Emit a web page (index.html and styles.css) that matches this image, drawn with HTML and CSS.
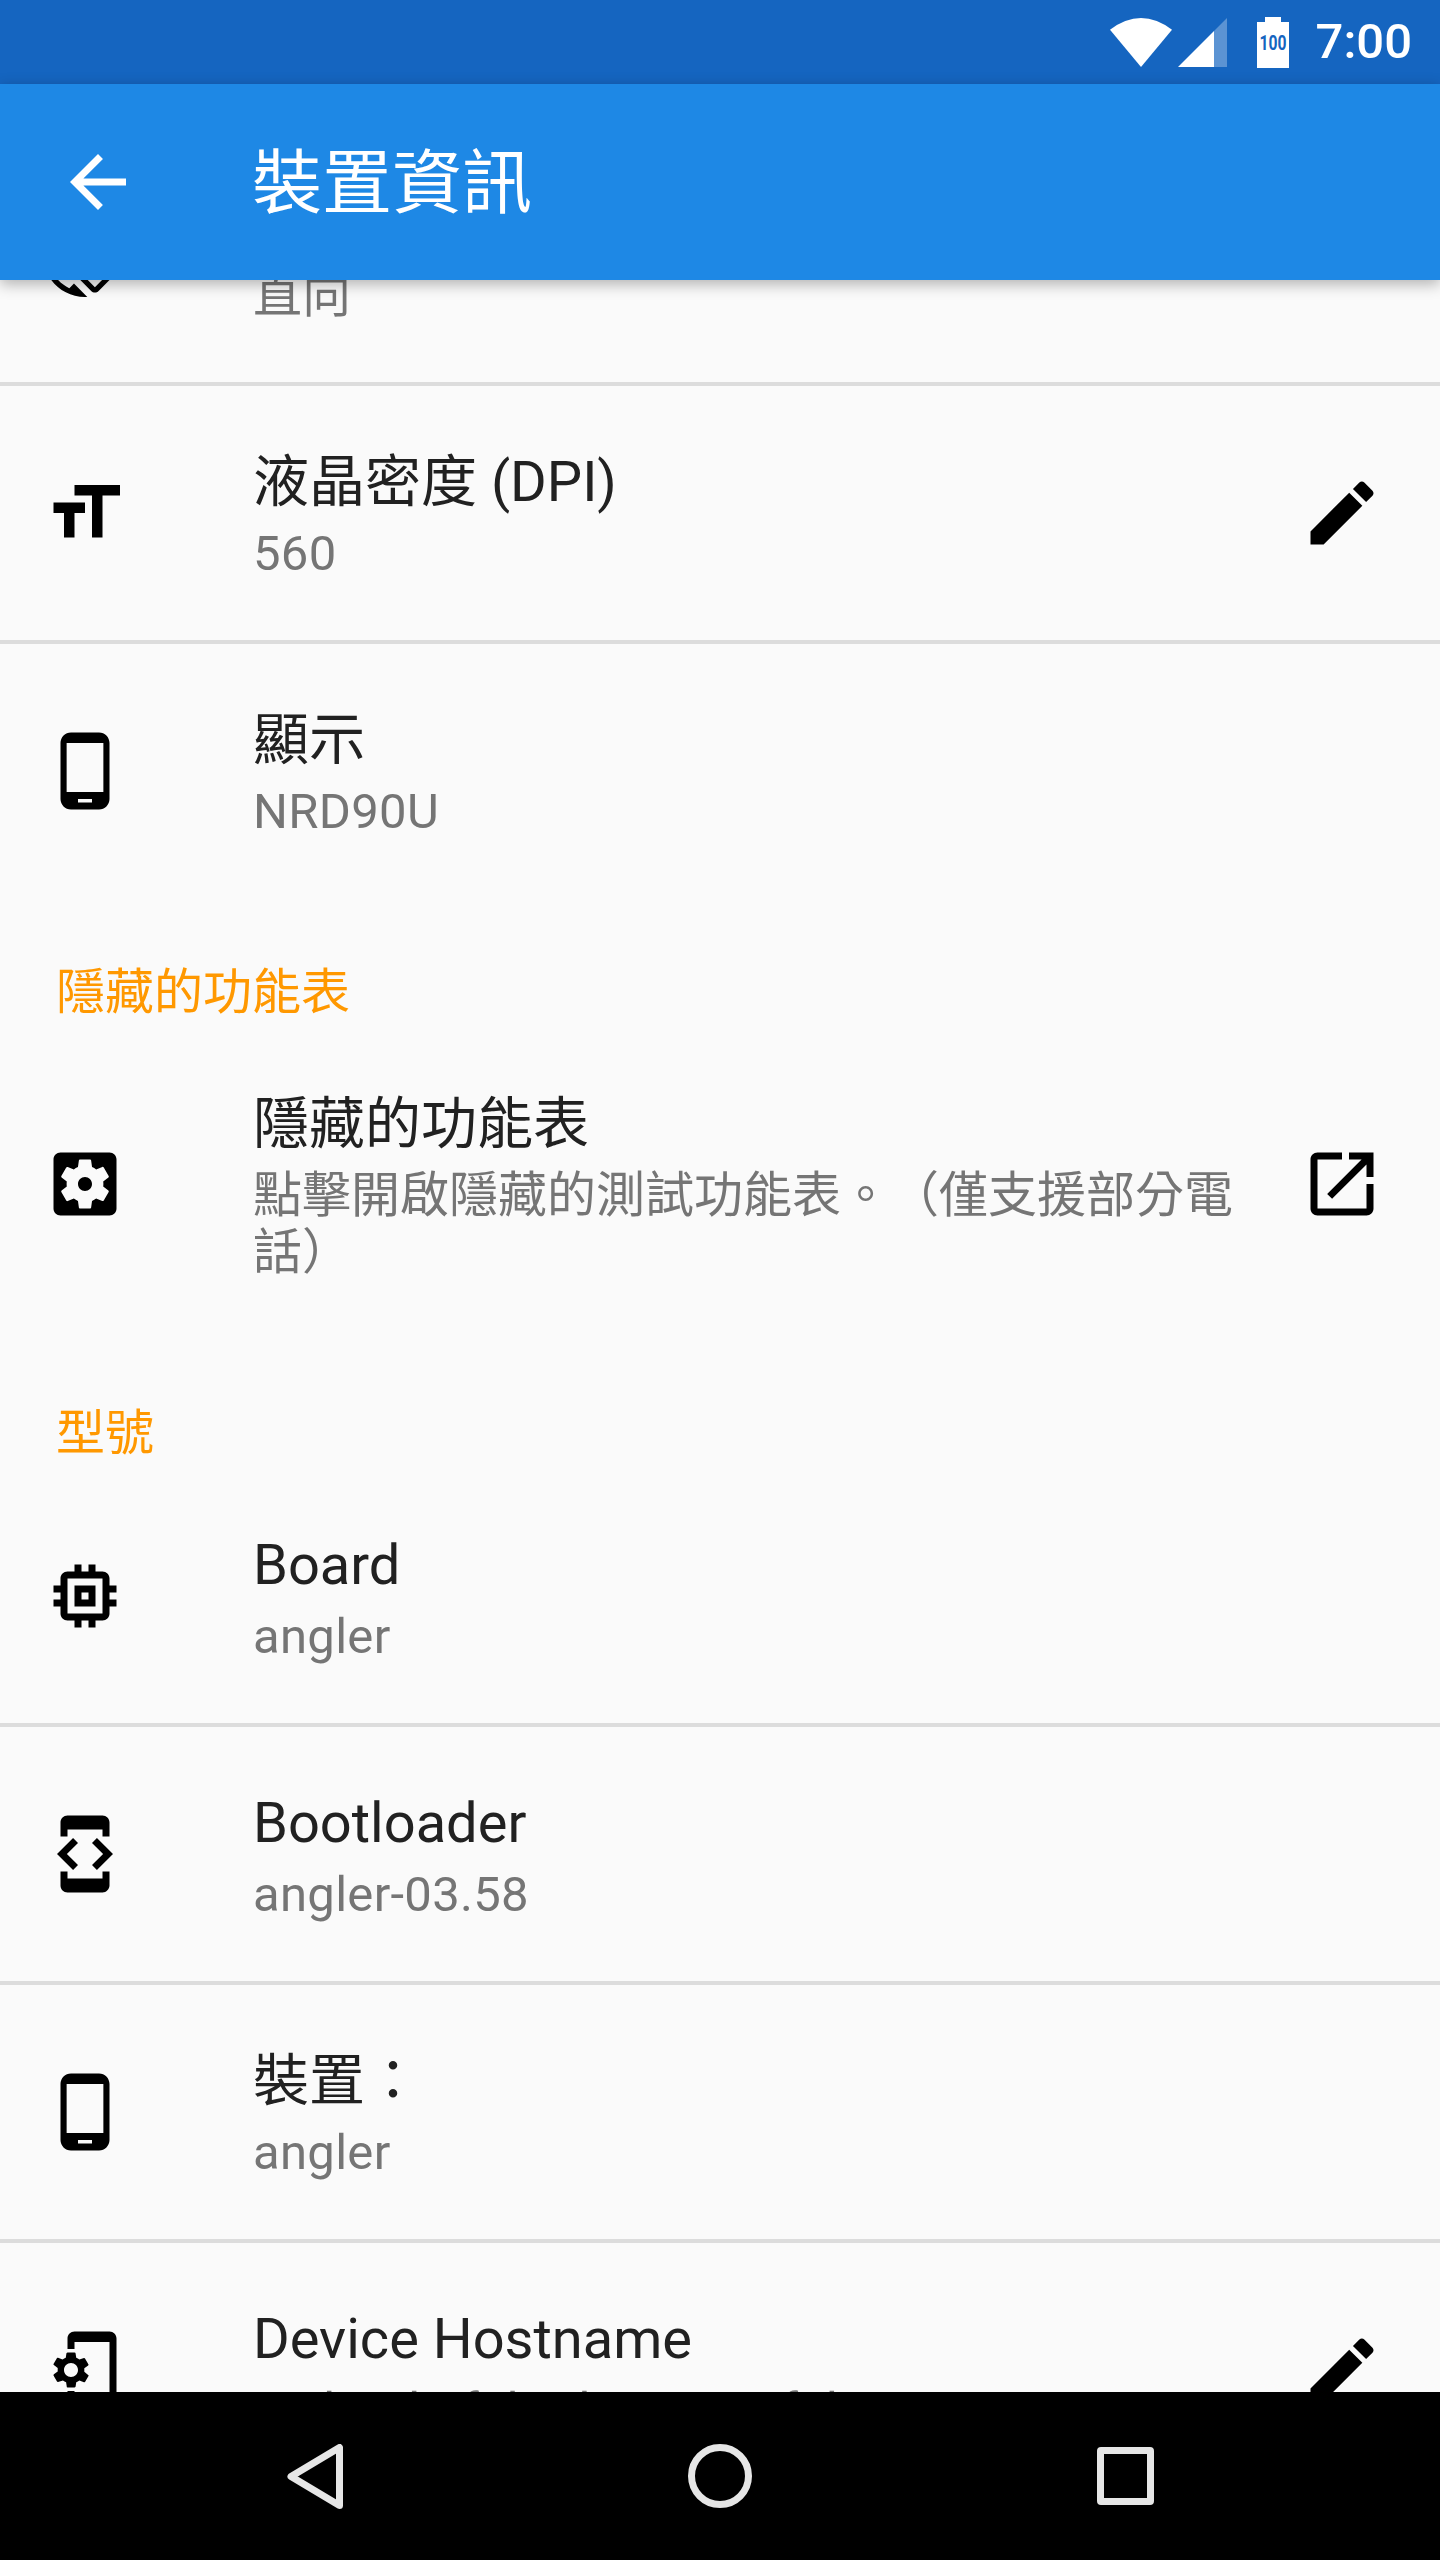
FILE: index.html
```html
<!DOCTYPE html>
<html lang="zh-TW">
<head>
    <meta charset="UTF-8">
    <meta name="viewport" content="width=device-width, initial-scale=1.0">
    <title>裝置資訊</title>
    <link rel="stylesheet" href="styles.css">
</head>
<body>
    <div class="screen">
        <div class="status-bar">
            <svg class="wifi" viewBox="0 0 62 49"><path d="M0 11.7Q31 -11.7 62 11.7L31 49Z"/></svg>
            <svg class="signal" viewBox="0 0 49 49"><path d="M36 49H0L36 13Z"/><path class="signal-empty" d="M36 49H49V0L36 13Z"/></svg>
            <svg class="battery" viewBox="0 0 32 51"><path d="M8 0H24V5H32V51H0V5H8Z"/><text class="battery-level" x="2.5" y="33" textLength="27" lengthAdjust="spacingAndGlyphs">100</text></svg>
            <span class="clock">7:00</span>
        </div>

        <div class="toolbar">
            <svg class="icon toolbar-back" viewBox="0 0 24 24"><path d="M20 11H7.83l5.59-5.59L12 4l-8 8 8 8 1.41-1.41L7.83 13H20v-2z"/></svg>
            <h1 class="toolbar-title">裝置資訊</h1>
        </div>

        <div class="list">
            <div class="list-scroll">
                <div class="row row-divided">
                    <svg class="icon" viewBox="0 0 24 24"><path d="M16.48 2.52c3.27 1.55 5.61 4.72 5.97 8.48h1.5C23.44 4.84 18.29 0 12 0l-.66.03 3.81 3.81 1.33-1.32zm-6.25-.77c-.59-.59-1.54-.59-2.12 0L1.75 8.11c-.59.59-.59 1.54 0 2.12l12.02 12.02c.59.59 1.54.59 2.12 0l6.36-6.36c.59-.59.59-1.54 0-2.12L10.23 1.75zm4.6 19.44L2.81 9.17l6.36-6.36 12.02 12.02-6.36 6.36zm-7.31.29C4.25 19.94 1.91 16.76 1.55 13H.05C.56 19.16 5.71 24 12 24l.66-.03-3.81-3.81-1.33 1.32z"/></svg>
                    <div class="row-body">
                        <div class="row-title"></div>
                        <div class="row-summary">直向</div>
                    </div>
                </div>

                <div class="row row-divided">
                    <svg class="icon" viewBox="0 0 24 24"><path d="M9 4v3h5v12h3V7h5V4H9zm-6 8h3v7h3v-7h3V9H3v3z"/></svg>
                    <div class="row-body">
                        <div class="row-title">液晶密度 (DPI)</div>
                        <div class="row-summary latin">560</div>
                    </div>
                    <svg class="icon" viewBox="0 0 24 24"><path d="M3 17.25V21h3.75L17.81 9.94l-3.75-3.75L3 17.25zM20.71 7.04c.39-.39.39-1.02 0-1.41l-2.34-2.34c-.39-.39-1.02-.39-1.41 0l-1.83 1.83 3.75 3.75 1.83-1.83z"/></svg>
                </div>

                <div class="row">
                    <svg class="icon" viewBox="0 0 24 24"><path d="M16 1H8C6.34 1 5 2.34 5 4v16c0 1.66 1.34 3 3 3h8c1.66 0 3-1.34 3-3V4c0-1.66-1.34-3-3-3zm-2 20h-4v-1h4v1zm3.25-3H6.75V4h10.5v14z"/></svg>
                    <div class="row-body">
                        <div class="row-title">顯示</div>
                        <div class="row-summary latin">NRD90U</div>
                    </div>
                </div>

                <div class="section-header">隱藏的功能表</div>

                <div class="row">
                    <svg class="icon" viewBox="0 0 24 24"><path d="M12 10c-1.1 0-2 .9-2 2s.9 2 2 2 2-.9 2-2-.9-2-2-2zm7-7H5c-1.11 0-2 .9-2 2v14c0 1.1.89 2 2 2h14c1.11 0 2-.9 2-2V5c0-1.1-.89-2-2-2zm-1.75 9c0 .23-.02.46-.05.68l1.48 1.16c.13.11.17.3.08.45l-1.4 2.42c-.09.15-.27.21-.43.15l-1.74-.7c-.36.28-.76.51-1.18.69l-.26 1.85c-.03.17-.18.3-.35.3h-2.8c-.17 0-.32-.13-.35-.29l-.26-1.85c-.43-.18-.82-.41-1.18-.69l-1.74.7c-.16.06-.34 0-.43-.15l-1.4-2.42c-.09-.15-.05-.34.08-.45l1.48-1.16c-.03-.23-.05-.46-.05-.69 0-.23.02-.46.05-.68l-1.48-1.16c-.13-.11-.17-.3-.08-.45l1.4-2.42c.09-.15.27-.21.43-.15l1.74.7c.36-.28.76-.51 1.18-.69l.26-1.85c.03-.17.18-.3.35-.3h2.8c.17 0 .32.13.35.29l.26 1.85c.43.18.82.41 1.18.69l1.74-.7c.16-.06.34 0 .43.15l1.4 2.42c.09.15.05.34-.08.45l-1.48 1.16c.03.23.05.46.05.69z"/></svg>
                    <div class="row-body">
                        <div class="row-title">隱藏的功能表</div>
                        <div class="row-summary">點擊開啟隱藏的測試功能表。（僅支援部分電話）</div>
                    </div>
                    <svg class="icon" viewBox="0 0 24 24"><path d="M19 19H5V5h7V3H5c-1.11 0-2 .9-2 2v14c0 1.1.89 2 2 2h14c1.1 0 2-.9 2-2v-7h-2v7zM14 3v2h3.59l-9.83 9.83 1.41 1.41L19 6.41V10h2V3h-7z"/></svg>
                </div>

                <div class="section-header">型號</div>

                <div class="row row-divided">
                    <svg class="icon" viewBox="0 0 24 24"><path d="M15 9H9v6h6V9zm-2 4h-2v-2h2v2zm8-2V9h-2V7c0-1.1-.9-2-2-2h-2V3h-2v2h-2V3H9v2H7c-1.1 0-2 .9-2 2v2H3v2h2v2H3v2h2v2c0 1.1.9 2 2 2h2v2h2v-2h2v2h2v-2h2c1.1 0 2-.9 2-2v-2h2v-2h-2v-2h2zm-4 6H7V7h10v10z"/></svg>
                    <div class="row-body">
                        <div class="row-title">Board</div>
                        <div class="row-summary latin">angler</div>
                    </div>
                </div>

                <div class="row row-divided">
                    <svg class="icon" viewBox="0 0 24 24"><path d="M7 5h10v2h2V3c0-1.1-.9-1.99-2-1.99L7 1c-1.1 0-2 .9-2 2v4h2V5zm8.41 11.59L20 12l-4.59-4.59L14 8.83 17.17 12 14 15.17l1.41 1.42zM10 15.17L6.83 12 10 8.83 8.59 7.41 4 12l4.59 4.59L10 15.17zM17 19H7v-2H5v4c0 1.1.9 2 2 2h10c1.1 0 2-.99 2-2v-4h-2v2z"/></svg>
                    <div class="row-body">
                        <div class="row-title">Bootloader</div>
                        <div class="row-summary latin">angler-03.58</div>
                    </div>
                </div>

                <div class="row row-divided">
                    <svg class="icon" viewBox="0 0 24 24"><path d="M16 1H8C6.34 1 5 2.34 5 4v16c0 1.66 1.34 3 3 3h8c1.66 0 3-1.34 3-3V4c0-1.66-1.34-3-3-3zm-2 20h-4v-1h4v1zm3.25-3H6.75V4h10.5v14z"/></svg>
                    <div class="row-body">
                        <div class="row-title">裝置：</div>
                        <div class="row-summary latin">angler</div>
                    </div>
                </div>

                <div class="row">
                    <svg class="icon" viewBox="0 0 24 24"><path d="M11.8 12.5v-1l1.1-.8c.1-.1.1-.2.1-.3l-1-1.7c-.1-.1-.2-.2-.3-.1l-1.3.4c-.3-.2-.6-.4-.9-.5l-.2-1.3c0-.1-.1-.2-.3-.2H7c-.1 0-.2.1-.3.2l-.2 1.3c-.3.1-.6.3-.9.5l-1.3-.5c-.1 0-.2 0-.3.1l-1 1.7c-.1.1 0 .2.1.3l1.1.8v1l-1.1.8c-.1.2-.1.3-.1.4l1 1.7c.1.1.2.2.3.1l1.4-.4c.3.2.6.4.9.5l.2 1.3c-.1.1.1.2.2.2h2c.1 0 .2-.1.3-.2l.2-1.3c.3-.1.6-.3.9-.5l1.3.5c.1 0 .2 0 .3-.1l1-1.7c.1-.1 0-.2-.1-.3l-1.1-.9zM8 14c-1.1 0-2-.9-2-2s.9-2 2-2 2 .9 2 2-.9 2-2 2zM19 1H9c-1.1 0-2 .9-2 2v3h2V4h10v16H9v-2H7v3c0 1.1.9 2 2 2h10c1.1 0 2-.9 2-2V3c0-1.1-.9-2-2-2z"/></svg>
                    <div class="row-body">
                        <div class="row-title">Device Hostname</div>
                        <div class="row-summary latin">android-1f4b6d8a9e3c7f2b</div>
                    </div>
                    <svg class="icon" viewBox="0 0 24 24"><path d="M3 17.25V21h3.75L17.81 9.94l-3.75-3.75L3 17.25zM20.71 7.04c.39-.39.39-1.02 0-1.41l-2.34-2.34c-.39-.39-1.02-.39-1.41 0l-1.83 1.83 3.75 3.75 1.83-1.83z"/></svg>
                </div>
            </div>
        </div>

        <div class="nav-bar">
            <svg class="nav-back" viewBox="0 0 56 65"><path d="M52.5 3.5V61.5L4 32.5Z"/></svg>
            <div class="nav-home"></div>
            <div class="nav-recents"></div>
        </div>
    </div>
</body>
</html>
```

FILE: styles.css
```css
* {
    box-sizing: border-box;
}
body {
    margin: 0;
    background-color: #fafafa;
    font-family: Roboto, "Noto Sans CJK TC", sans-serif;
    text-spacing-trim: space-all;
}
.screen {
    display: flex;
    flex-direction: column;
    width: 1440px;
    height: 2560px;
    overflow: hidden;
}

/* Status bar */
.status-bar {
    display: flex;
    align-items: center;
    justify-content: flex-end;
    flex: 0 0 84px;
    padding-right: 28px;
    background-color: #1565c0;
    color: #fff;
}
.status-bar svg {
    display: block;
    fill: #fff;
}
.wifi {
    width: 62px;
    height: 49px;
    margin-right: 6px;
}
.signal {
    width: 49px;
    height: 49px;
    margin-right: 30px;
}
.signal .signal-empty {
    fill: rgba(255, 255, 255, 0.3);
}
.battery {
    width: 32px;
    height: 51px;
    margin-right: 27px;
}
.status-bar .battery-level {
    fill: #1565c0;
    font-size: 20px;
    font-weight: 700;
}
.clock {
    font-size: 49px;
    font-weight: 500;
    line-height: 84px;
}

/* Toolbar */
.toolbar {
    position: relative;
    z-index: 1;
    display: flex;
    align-items: center;
    flex: 0 0 196px;
    padding-left: 56px;
    background-color: #1e88e5;
    box-shadow: 0 4px 14px rgba(0, 0, 0, 0.3);
}
.toolbar-back {
    fill: #fff;
}
.toolbar-title {
    margin: 0 0 0 112px;
    padding-top: 4px;
    font-size: 70px;
    font-weight: 400;
    line-height: 82px;
    color: #fff;
}

/* List */
.icon {
    display: block;
    flex: 0 0 84px;
    width: 84px;
    height: 84px;
}
.list {
    flex: 1;
    min-height: 0;
    overflow: hidden;
}
.list-scroll {
    margin-top: -152px;
}
.row {
    display: flex;
    align-items: center;
    padding: 0 56px 0 43px;
}
.row-divided {
    border-bottom: 4px solid #dcdcdc;
}
.row-body {
    flex: 1;
    min-width: 0;
    margin: 0 40px 0 126px;
    padding: 63px 0 58px;
}
.row-title {
    min-height: 66px;
    font-size: 56px;
    line-height: 66px;
    color: #212121;
}
.row-summary {
    margin-top: 10px;
    font-size: 49px;
    line-height: 57px;
    color: #757575;
}
.latin {
    letter-spacing: 0.3px;
}
.section-header {
    height: 130px;
    padding: 66px 0 6px 56px;
    font-size: 49px;
    line-height: 58px;
    color: #ff9800;
}

/* Navigation bar */
.nav-bar {
    display: flex;
    align-items: center;
    justify-content: center;
    flex: 0 0 168px;
    background-color: #000;
}
.nav-back {
    display: block;
    width: 56px;
    height: 65px;
    fill: none;
    stroke: #e6e6e6;
    stroke-width: 7;
    stroke-linejoin: round;
}
.nav-home {
    width: 64px;
    height: 64px;
    margin: 0 345px 0 345px;
    border: 7px solid #e6e6e6;
    border-radius: 50%;
}
.nav-recents {
    width: 57px;
    height: 58px;
    border: 7px solid #e6e6e6;
    border-radius: 4px;
}
```
